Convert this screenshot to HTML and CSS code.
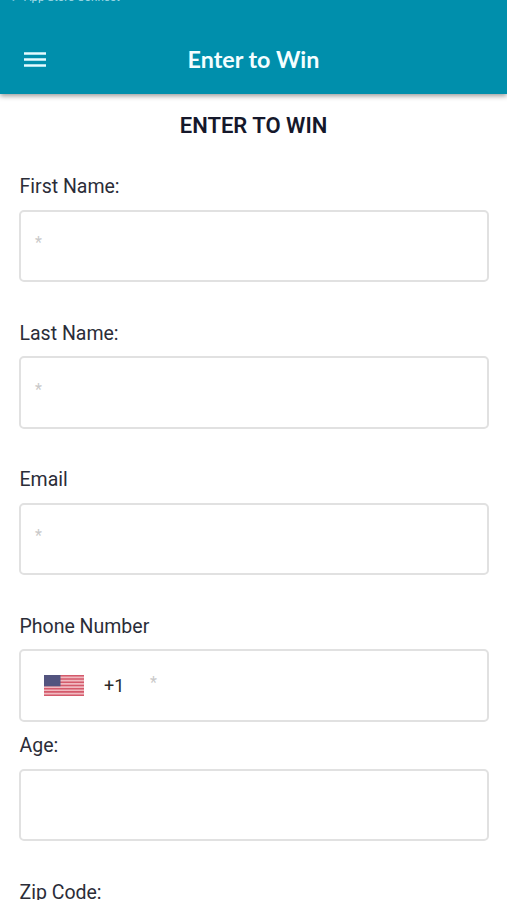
FILE: index.html
```html
<!DOCTYPE html>
<html lang="en">
<head>
<meta charset="utf-8">
<title>Enter to Win</title>
<link rel="stylesheet" href="styles.css">
</head>
<body>
<header class="app-bar">
  <div class="status"><span>◂</span><span>App Store Connect</span></div>
  <div class="toolbar">
    <button class="menu" aria-label="Menu"><svg width="22" height="16" viewBox="0 0 22 16"><path d="M0 1.5h22M0 7.5h22M0 13.5h22" stroke="#e4fbff" stroke-width="2.4"/></svg></button>
    <div class="title">Enter to Win</div>
  </div>
</header>
<main class="form">
  <h1 class="heading">ENTER TO WIN</h1>
  <div class="field"><div class="label">First Name:</div><div class="input"><span class="hint">*</span></div></div>
  <div class="field"><div class="label">Last Name:</div><div class="input"><span class="hint">*</span></div></div>
  <div class="field"><div class="label">Email</div><div class="input"><span class="hint">*</span></div></div>
  <div class="field phone"><div class="label">Phone Number</div><div class="input">
    <svg class="flag" width="40" height="21" viewBox="0 0 40 21"><path fill="#f0b9c0" d="M0 0h40v21H0z"/><path d="M0 .8h40M0 4h40M0 7.25h40M0 10.5h40M0 13.7h40M0 16.9h40M0 20.2h40" stroke="#d45a6b" stroke-width="1.6"/><path fill="#53547f" d="M0 0h16.5v11.3H0z"/></svg>
    <span class="code">+1</span><span class="hint">*</span></div></div>
  <div class="field"><div class="label">Age:</div><div class="input"></div></div>
  <div class="field last"><div class="label">Zip Code:</div></div>
</main>
</body>
</html>
```
FILE: styles.css
```css
* { box-sizing: border-box; }
body {
  margin: 0;
  height: 900px;
  overflow: hidden;
  background: #fff;
  color: #2b2d38;
  font-family: Roboto, sans-serif;
}
.app-bar {
  height: 94px;
  overflow: hidden;
  background: #008fac;
  color: #f4feff;
  box-shadow: 0 2px 5px rgba(0, 0, 0, .4);
}
.status {
  display: flex;
  gap: 10px;
  height: 25px;
  margin-top: -10px;
  padding-left: 8px;
  font-size: 11.5px;
  line-height: 14px;
  color: #a5dce8;
}
.toolbar {
  display: grid;
  grid-template-columns: 70px 1fr 70px;
  align-items: center;
  height: 90px;
}
.menu {
  display: flex;
  padding: 0 0 0 24px;
  border: 0;
  background: none;
}
.title {
  padding-bottom: 2px;
  text-align: center;
  font: 700 23.3px/30px Lato, sans-serif;
}
.form { padding: 0 18.5px; }
.heading {
  margin: 0;
  padding-top: 16px;
  height: 78px;
  text-align: center;
  font-size: 22px;
  line-height: 31px;
  font-weight: 600;
  color: #15182b;
}
.field { height: 146.6px; }
.phone { height: 119.6px; }
.last { height: 20px; }
.label {
  height: 37.5px;
  padding-left: 1px;
  line-height: 30px;
  font-size: 19.5px;
}
.input {
  display: flex;
  align-items: center;
  height: 72.5px;
  padding-left: 14.5px;
  border: 2px solid #e1e1e1;
  border-radius: 5px;
}
.hint {
  padding-bottom: 5px;
  font-size: 16px;
  line-height: 20px;
  color: #c9c9c9;
}
.flag { margin-left: 9px; }
.code {
  width: 46px;
  margin-left: 20px;
  font-size: 18px;
  color: #292929;
}
```
